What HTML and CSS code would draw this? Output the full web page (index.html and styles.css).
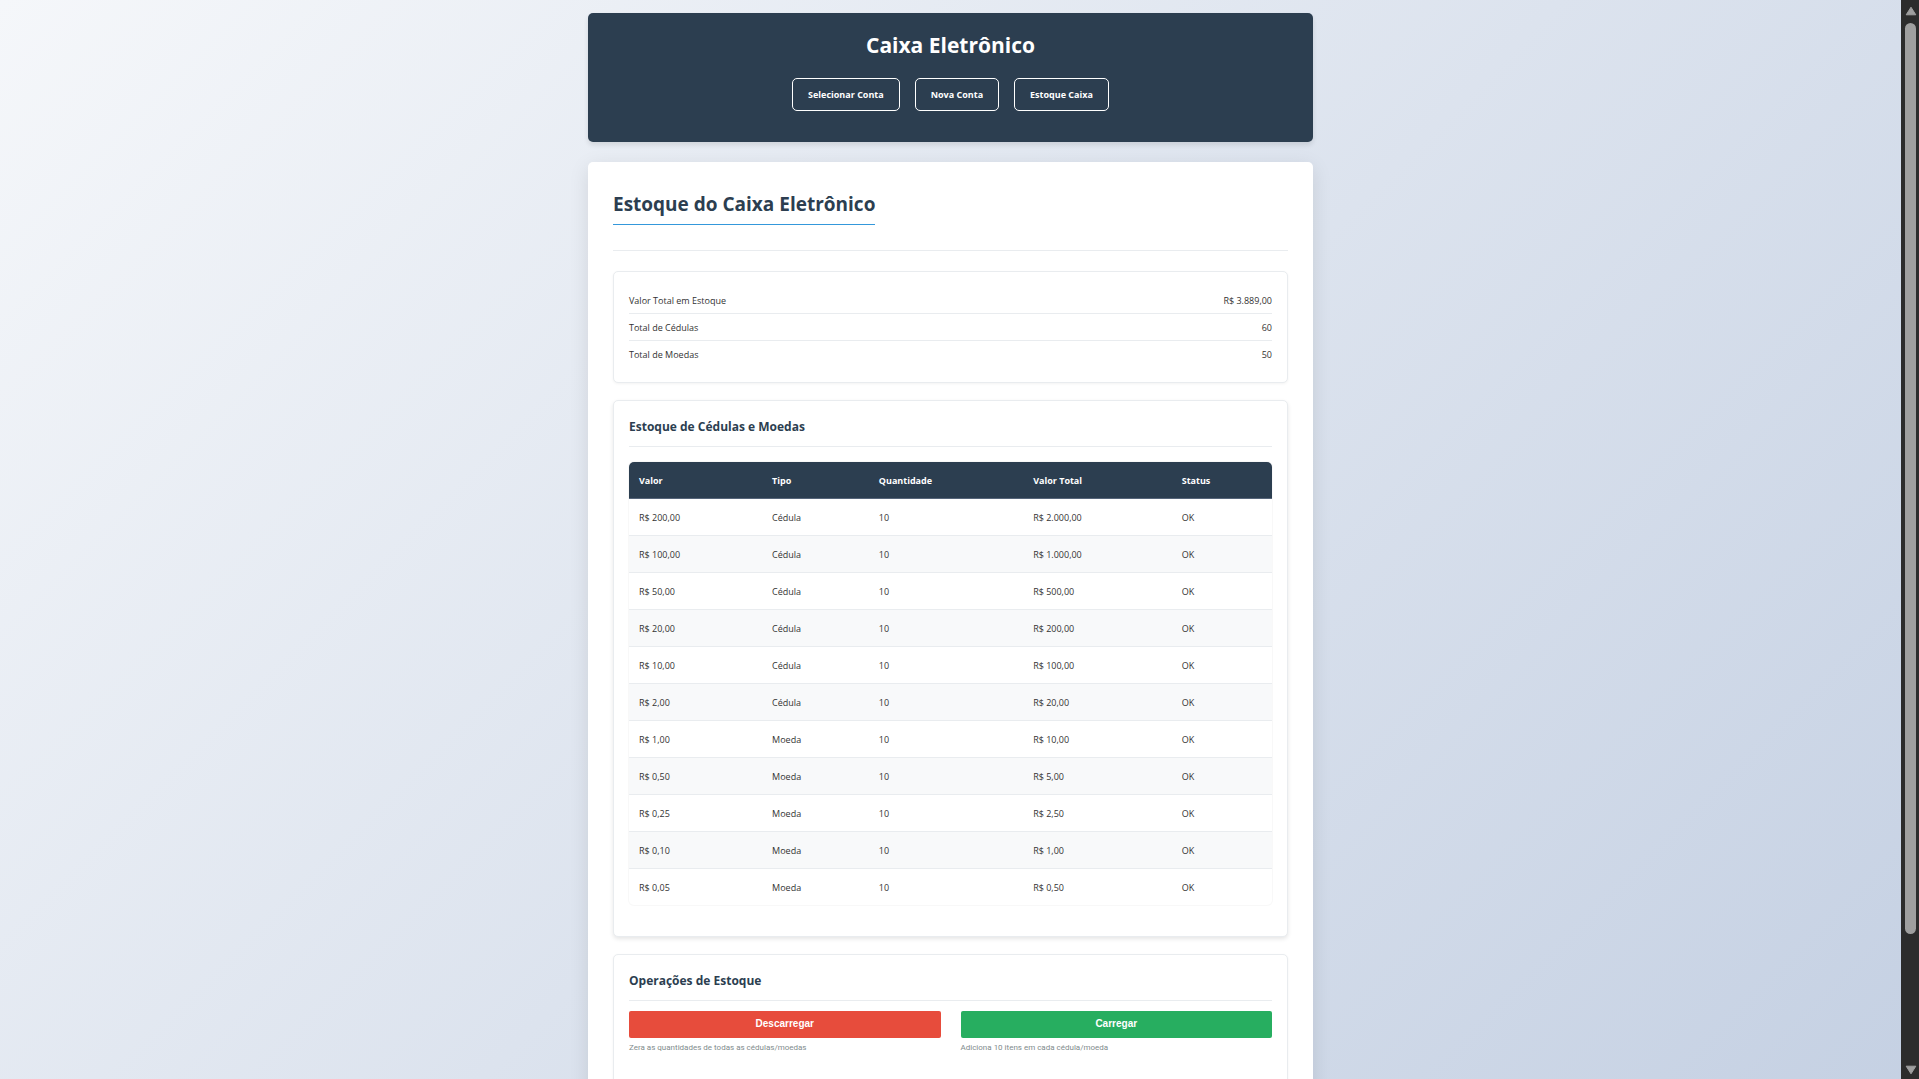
FILE: index.html
```html
<!DOCTYPE html>
<html lang="pt-BR">
<head>
<meta charset="utf-8">
<meta name="viewport" content="width=device-width, initial-scale=1">
<title>Caixa Eletrônico</title>
<link rel="stylesheet" href="styles.css">
</head>
<body>
<div class="page">
  <div class="container">
    <header class="header">
      <h1 class="header-title">Caixa Eletrônico</h1>
      <nav class="nav">
        <a class="nav-link" href="#contas">Selecionar Conta</a>
        <a class="nav-link" href="#nova">Nova Conta</a>
        <a class="nav-link" href="#estoque">Estoque Caixa</a>
      </nav>
    </header>

    <main class="main">
      <div class="page-head">
        <h2 class="page-title">Estoque do Caixa Eletrônico</h2>
      </div>

      <section class="card">
        <dl class="summary">
          <div class="summary-row"><dt>Valor Total em Estoque</dt><dd>R$ 3.889,00</dd></div>
          <div class="summary-row"><dt>Total de Cédulas</dt><dd>60</dd></div>
          <div class="summary-row"><dt>Total de Moedas</dt><dd>50</dd></div>
        </dl>
      </section>

      <section class="card card-raised">
        <h3 class="card-title">Estoque de Cédulas e Moedas</h3>
        <table class="stock">
          <colgroup>
            <col class="col-value"><col class="col-type"><col class="col-amount"><col class="col-total"><col>
          </colgroup>
          <thead>
            <tr><th scope="col">Valor</th><th scope="col">Tipo</th><th scope="col">Quantidade</th><th scope="col">Valor Total</th><th scope="col">Status</th></tr>
          </thead>
          <tbody>
            <tr><td>R$ 200,00</td><td>Cédula</td><td>10</td><td>R$ 2.000,00</td><td>OK</td></tr>
            <tr><td>R$ 100,00</td><td>Cédula</td><td>10</td><td>R$ 1.000,00</td><td>OK</td></tr>
            <tr><td>R$ 50,00</td><td>Cédula</td><td>10</td><td>R$ 500,00</td><td>OK</td></tr>
            <tr><td>R$ 20,00</td><td>Cédula</td><td>10</td><td>R$ 200,00</td><td>OK</td></tr>
            <tr><td>R$ 10,00</td><td>Cédula</td><td>10</td><td>R$ 100,00</td><td>OK</td></tr>
            <tr><td>R$ 2,00</td><td>Cédula</td><td>10</td><td>R$ 20,00</td><td>OK</td></tr>
            <tr><td>R$ 1,00</td><td>Moeda</td><td>10</td><td>R$ 10,00</td><td>OK</td></tr>
            <tr><td>R$ 0,50</td><td>Moeda</td><td>10</td><td>R$ 5,00</td><td>OK</td></tr>
            <tr><td>R$ 0,25</td><td>Moeda</td><td>10</td><td>R$ 2,50</td><td>OK</td></tr>
            <tr><td>R$ 0,10</td><td>Moeda</td><td>10</td><td>R$ 1,00</td><td>OK</td></tr>
            <tr><td>R$ 0,05</td><td>Moeda</td><td>10</td><td>R$ 0,50</td><td>OK</td></tr>
          </tbody>
        </table>
      </section>

      <section class="card card-operations">
        <h3 class="card-title card-title-tight">Operações de Estoque</h3>
        <div class="operations">
          <div class="operation">
            <button class="button button-danger" type="button" aria-describedby="hint-unload">Descarregar</button>
            <p class="hint" id="hint-unload">Zera as quantidades de todas as cédulas/moedas</p>
          </div>
          <div class="operation">
            <button class="button button-success" type="button" aria-describedby="hint-load">Carregar</button>
            <p class="hint" id="hint-load">Adiciona 10 itens em cada cédula/moeda</p>
          </div>
        </div>
      </section>
    </main>
  </div>
</div>

<div class="scrollbar" aria-hidden="true">
  <svg class="scroll-arrow" viewBox="0 0 12 10"><path d="M6 1.2 10.8 8.8H1.2Z"/></svg>
  <div class="scroll-track"><div class="scroll-thumb"></div></div>
  <svg class="scroll-arrow" viewBox="0 0 12 10"><path d="M6 8.8 10.8 1.2H1.2Z"/></svg>
</div>
</body>
</html>
```
FILE: styles.css
```css
:root {
  --navy: #2c3e50;
  --line: #e9ecef;
  --text: #333;
  --bar: 18px;
}

* {
  box-sizing: border-box;
  margin: 0;
  padding: 0;
}

body {
  display: grid;
  grid-template-columns: minmax(0, 1fr) var(--bar);
  height: 100vh;
  overflow: hidden;
  background: linear-gradient(135deg, #f5f7fa 0%, #c3cfe2 104%);
  color: var(--text);
  font-family: "Open Sans", "Noto Sans", sans-serif;
  font-size: 9px;
  line-height: 16px;
}

.page {
  height: 100vh;
  overflow-y: auto;
  scrollbar-width: none;
}

.container {
  max-width: 725px;
  margin: 0 auto;
  padding: 13px 0;
}

/* Header */
.header {
  padding: 15px 20px 31px;
  margin-bottom: 20px;
  border-radius: 5px;
  background: var(--navy);
  color: #fff;
  text-align: center;
  box-shadow: 0 3px 5px rgba(0, 0, 0, 0.1);
}

.header-title {
  margin-bottom: 16px;
  font-size: 21px;
  line-height: 34px;
}

.nav {
  display: flex;
  flex-wrap: wrap;
  justify-content: center;
  gap: 15px;
}

.nav-link {
  padding: 8px 15px 7px;
  border: 1px solid #fff;
  border-radius: 5px;
  color: #fff;
  font-weight: bold;
  text-decoration: none;
}

/* Content */
.main {
  padding: 25px;
  border-radius: 5px;
  background: #fff;
  box-shadow: 0 5px 20px rgba(0, 0, 0, 0.1);
}

.page-head {
  display: flex;
  padding-bottom: 25px;
  margin-bottom: 20px;
  border-bottom: 1px solid var(--line);
}

.page-title {
  padding: 1px 0 4px;
  border-bottom: 1px solid #3498db;
  color: var(--navy);
  font-size: 19px;
  line-height: 32px;
}

.card {
  padding: 15px;
  margin-bottom: 17px;
  border: 1px solid var(--line);
  border-radius: 5px;
  background: #fff;
  box-shadow: 0 1px 3px rgba(0, 0, 0, 0.05);
}

.card-raised {
  padding-bottom: 31px;
  box-shadow: 0 2px 4px rgba(0, 0, 0, 0.1);
}

.card-operations {
  padding-bottom: 45px;
}

.card-title {
  padding: 1px 0 9px;
  margin-bottom: 15px;
  border-bottom: 1px solid var(--line);
  color: var(--navy);
  font-size: 12px;
  line-height: 20px;
}

.card-title-tight {
  margin-bottom: 10px;
}

.summary-row {
  display: flex;
  justify-content: space-between;
  padding: 6px 0 4px;
  border-bottom: 1px solid var(--line);
}

.summary-row:last-child {
  border-bottom: 0;
}

/* Stock table */
.stock {
  width: 100%;
  border-collapse: separate;
  border-spacing: 0;
  border-radius: 5px;
  overflow: hidden;
  table-layout: fixed;
  box-shadow: 0 0 1px 1px rgba(0, 0, 0, 0.03);
}

.col-value { width: 20.7%; }
.col-type { width: 16.6%; }
.col-amount { width: 24%; }
.col-total { width: 23.1%; }

.stock th,
.stock td {
  padding: 11px 10px 9px;
  border-bottom: 1px solid var(--line);
  text-align: left;
}

.stock th {
  border-bottom-color: #56657a;
  background: var(--navy);
  color: #fff;
  font-weight: bold;
}

.stock tbody tr:nth-child(even) {
  background: #f8f9fa;
}

.stock tbody tr:last-child td {
  border-bottom: 0;
}

/* Operations */
.operations {
  display: grid;
  grid-template-columns: 1fr 1fr;
  gap: 20px;
}

.button {
  display: block;
  width: 100%;
  padding: 5px 10px 6px;
  border: 0;
  border-radius: 2px;
  color: #fff;
  font: bold 10px/16px "Liberation Sans", Arial, sans-serif;
}

.button-danger { background: #e74c3c; }
.button-success { background: #27ae60; }

.hint {
  margin-top: 3px;
  color: #7f8c8d;
  font-family: Roboto, "Open Sans", sans-serif;
  font-size: 8px;
  line-height: 14px;
}

/* Scrollbar */
.scrollbar {
  display: flex;
  flex-direction: column;
  align-items: center;
  gap: 7px;
  padding: 6px 0 4px 1px;
  background: #2c2c2c;
}

.scroll-arrow {
  width: 14px;
  height: 10px;
  fill: #9f9f9f;
  stroke: #9f9f9f;
  stroke-linejoin: round;
}

.scroll-track {
  flex: 1;
  width: 11px;
}

.scroll-thumb {
  height: 88%;
  border-radius: 6px;
  background: #9f9f9f;
}
```
